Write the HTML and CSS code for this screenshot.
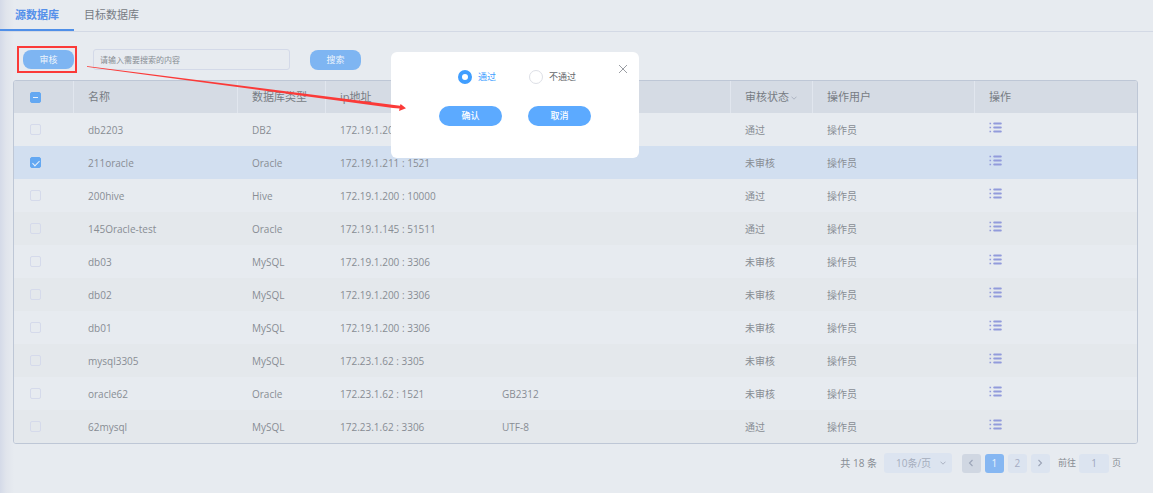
FILE: index.html
```html
<!DOCTYPE html>
<html lang="zh-CN">
<head>
<meta charset="utf-8">
<title>源数据库</title>
<link rel="stylesheet" href="styles.css">
</head>
<body>
<svg class="defs" aria-hidden="true">
  <symbol id="list" viewBox="0 0 13 11">
    <path d="M0.5 1.5h1.6M0.5 5.5h1.6M0.5 9.5h1.6" stroke="currentColor" stroke-width="1.6"/>
    <path d="M5.2 1.5h6.6M5.2 5.5h6.6M5.2 9.5h6.6" stroke="currentColor" stroke-width="2" stroke-linecap="round"/>
  </symbol>
  <symbol id="down" viewBox="0 0 6 4">
    <path d="M0.5 0.7L3 3.2L5.5 0.7" fill="none" stroke="currentColor" stroke-width="0.9"/>
  </symbol>
</svg>
<nav class="tabs">
  <a class="tab active" href="#source">源数据库</a>
  <a class="tab" href="#target">目标数据库</a>
</nav>
<main class="page">
  <div class="toolbar">
    <span class="marked"><button class="btn" type="button">审核</button></span>
    <input class="search" type="text" placeholder="请输入需要搜索的内容" aria-label="搜索内容">
    <button class="btn" type="button">搜索</button>
  </div>
  <div class="frame">
    <table class="grid">
      <colgroup><col class="c-check"><col class="c-name"><col class="c-type"><col class="c-wide"><col class="c-code"><col class="c-state"><col class="c-wide"><col class="c-wide"></colgroup>
      <thead>
        <tr><th><input class="check partial" type="checkbox" aria-label="全选"></th><th>名称</th><th>数据库类型</th><th>ip地址</th><th></th><th>审核状态<svg class="sort"><use href="#down"/></svg></th><th>操作用户</th><th>操作</th></tr>
      </thead>
      <tbody>
        <tr><td><input class="check" type="checkbox" aria-label="db2203"></td><td>db2203</td><td>DB2</td><td>172.19.1.200 : 50000</td><td></td><td>通过</td><td>操作员</td><td><button class="more" type="button" aria-label="详情"><svg><use href="#list"/></svg></button></td></tr>
        <tr class="selected"><td><input class="check" type="checkbox" checked aria-label="211oracle"></td><td>211oracle</td><td>Oracle</td><td>172.19.1.211 : 1521</td><td></td><td>未审核</td><td>操作员</td><td><button class="more" type="button" aria-label="详情"><svg><use href="#list"/></svg></button></td></tr>
        <tr><td><input class="check" type="checkbox" aria-label="200hive"></td><td>200hive</td><td>Hive</td><td>172.19.1.200 : 10000</td><td></td><td>通过</td><td>操作员</td><td><button class="more" type="button" aria-label="详情"><svg><use href="#list"/></svg></button></td></tr>
        <tr><td><input class="check" type="checkbox" aria-label="145Oracle-test"></td><td>145Oracle-test</td><td>Oracle</td><td>172.19.1.145 : 51511</td><td></td><td>通过</td><td>操作员</td><td><button class="more" type="button" aria-label="详情"><svg><use href="#list"/></svg></button></td></tr>
        <tr><td><input class="check" type="checkbox" aria-label="db03"></td><td>db03</td><td>MySQL</td><td>172.19.1.200 : 3306</td><td></td><td>未审核</td><td>操作员</td><td><button class="more" type="button" aria-label="详情"><svg><use href="#list"/></svg></button></td></tr>
        <tr><td><input class="check" type="checkbox" aria-label="db02"></td><td>db02</td><td>MySQL</td><td>172.19.1.200 : 3306</td><td></td><td>未审核</td><td>操作员</td><td><button class="more" type="button" aria-label="详情"><svg><use href="#list"/></svg></button></td></tr>
        <tr><td><input class="check" type="checkbox" aria-label="db01"></td><td>db01</td><td>MySQL</td><td>172.19.1.200 : 3306</td><td></td><td>未审核</td><td>操作员</td><td><button class="more" type="button" aria-label="详情"><svg><use href="#list"/></svg></button></td></tr>
        <tr><td><input class="check" type="checkbox" aria-label="mysql3305"></td><td>mysql3305</td><td>MySQL</td><td>172.23.1.62 : 3305</td><td></td><td>未审核</td><td>操作员</td><td><button class="more" type="button" aria-label="详情"><svg><use href="#list"/></svg></button></td></tr>
        <tr><td><input class="check" type="checkbox" aria-label="oracle62"></td><td>oracle62</td><td>Oracle</td><td>172.23.1.62 : 1521</td><td>GB2312</td><td>未审核</td><td>操作员</td><td><button class="more" type="button" aria-label="详情"><svg><use href="#list"/></svg></button></td></tr>
        <tr><td><input class="check" type="checkbox" aria-label="62mysql"></td><td>62mysql</td><td>MySQL</td><td>172.23.1.62 : 3306</td><td>UTF-8</td><td>通过</td><td>操作员</td><td><button class="more" type="button" aria-label="详情"><svg><use href="#list"/></svg></button></td></tr>
      </tbody>
    </table>
  </div>
  <div class="pager">
    <span class="total">共 18 条</span>
    <span class="size"><select aria-label="每页条数"><option>10条/页</option></select><svg class="caret"><use href="#down"/></svg></span>
    <div class="pages">
      <button class="num off" type="button" aria-label="上一页"><svg viewBox="0 0 6 8"><path d="M4.5 1L1.5 4L4.5 7" fill="none" stroke="currentColor" stroke-width="1.1"/></svg></button>
      <button class="num current" type="button">1</button>
      <button class="num" type="button">2</button>
      <button class="num next" type="button" aria-label="下一页"><svg viewBox="0 0 6 8"><path d="M1.5 1L4.5 4L1.5 7" fill="none" stroke="currentColor" stroke-width="1.1"/></svg></button>
    </div>
    <label class="jump">前往<input type="text" value="1">页</label>
  </div>
</main>
<section class="dialog" role="dialog" aria-label="审核">
  <button class="close" type="button" aria-label="关闭"><svg viewBox="0 0 10 10"><path d="M1 1L9 9M9 1L1 9" stroke="currentColor" stroke-width="0.9"/></svg></button>
  <div class="choices">
    <label class="choice"><input type="radio" name="result" checked><span>通过</span></label>
    <label class="choice"><input type="radio" name="result"><span>不通过</span></label>
  </div>
  <div class="actions">
    <button class="pill" type="button">确认</button>
    <button class="pill" type="button">取消</button>
  </div>
</section>
<svg class="arrow" viewBox="0 0 320 46" aria-hidden="true"><path d="M0 0L313 39.8L313.6 38L319 42.3L312 45L312.6 42.6L306 42L0 0.8Z" fill="#fb3a38"/></svg>
</body>
</html>
```
FILE: styles.css
```css
* { box-sizing: border-box; }
body {
  margin: 0;
  min-height: 100vh;
  position: relative;
  background: linear-gradient(90deg, #d4dae8 0, #e0e4ec 6px, #e7ebf0 14px);
  color: #888d94;
  font: 10px/14px "Open Sans", "Noto Sans CJK SC", sans-serif;
}
button, input, select { font: inherit; color: inherit; margin: 0; padding: 0; }
button { border: 0; background: none; }
svg { display: block; }
.defs { position: absolute; width: 0; height: 0; }

.tabs { display: flex; height: 32px; border-bottom: 1px solid #d3d9e5; }
.tab {
  display: flex;
  align-items: center;
  height: 31px;
  padding: 0 10px;
  border-bottom: 2px solid transparent;
  color: #777c84;
  font-size: 11px;
  text-decoration: none;
}
.tab.active { padding: 0 15px; border-color: #4f8fe8; color: #5590ea; font-weight: 700; }

.page { padding: 14px 15px 20px 13px; }
.toolbar { display: flex; align-items: center; padding-left: 4px; height: 27px; }
.marked { display: flex; padding: 2px 1px 2px 4px; border: 2px solid #fb3a38; }
.btn { width: 51px; height: 20px; border-radius: 8px; background: #7eb5f2; color: #edf4fc; font-size: 9px; }
.marked .btn { height: 19px; }
.search {
  width: 197px;
  height: 21px;
  margin: 0 20px 0 16px;
  padding: 0 6px;
  border: 1px solid #d3d9e8;
  border-radius: 3px;
  background: transparent;
  font-size: 8px;
}
.search::placeholder { color: #888d94; opacity: 1; }

.frame { margin-top: 7px; border: 1px solid #bec7d6; border-radius: 3px; overflow: hidden; }
.grid { width: 100%; table-layout: fixed; border-collapse: separate; border-spacing: 0; }
.c-check { width: 60px; }
.c-name { width: 164px; }
.c-wide { width: 162px; }
.c-type { width: 88px; }
.c-code { width: 243px; }
.c-state { width: 82px; }
th, td { height: 33px; padding: 0 0 0 14px; text-align: left; white-space: nowrap; }
th { height: 32px; background: #d5dbe4; border-right: 1px solid #e1e6ee; color: #777c83; font-size: 11px; font-weight: 400; }
th:nth-child(4), th:last-child { border-right: 0; }
th:first-child, td:first-child { padding-left: 16px; }
tbody tr:nth-child(even) { background: #e4e8ec; }
tbody tr.selected { background: #d2dff0; }
.sort { display: inline-block; width: 6px; height: 4px; margin-left: 2px; vertical-align: middle; color: #a8b0be; }
.check {
  appearance: none;
  display: block;
  width: 11px;
  height: 11px;
  border: 1px solid #d5daeb;
  border-radius: 2px;
}
.check:checked, .check.partial { display: grid; place-items: center; border-color: #64a8f2; background: #64a8f2; }
.check.partial::after { content: ""; width: 5px; height: 1px; background: #e7f0fb; }
.check:checked::after { content: ""; width: 3px; height: 6px; border: solid #e7f0fb; border-width: 0 1px 1px 0; transform: rotate(45deg); }
.more { display: block; margin-bottom: 5px; color: #929bdb; }
.more svg { width: 13px; height: 11px; }

.pager { display: flex; align-items: center; justify-content: flex-end; margin-top: 9px; padding-right: 17px; }
.size { position: relative; margin: 0 10px 0 7px; }
.size select { appearance: none; display: block; width: 68px; height: 20px; padding-left: 12px; border: 0; border-radius: 3px; background: #dce4f0; color: #a5adbd; }
.caret { position: absolute; right: 6px; top: 8px; width: 6px; height: 4px; color: #a5adbd; }
.pages { display: flex; gap: 4px; margin-right: 8px; }
.num { display: grid; place-items: center; width: 19px; height: 19px; border-radius: 3px; background: #dce4f0; color: #a5adc4; }
.num svg { width: 6px; height: 8px; }
.num.off { background: #d0d7e2; color: #9ca5b8; }
.num.next { color: #9ba3b6; }
.num.current { background: #86b7f2; color: #edf4fc; }
.jump { display: flex; align-items: center; gap: 3px; font-size: 9px; }
.jump input { width: 30px; height: 19px; border: 0; border-radius: 3px; background: #dce4f0; color: #a0a8bd; font-size: 10px; text-align: center; }

.dialog {
  position: absolute;
  left: 391px;
  top: 52px;
  width: 248px;
  padding: 18px 0 32px;
  border-radius: 6px;
  background: #fff;
}
.close { position: absolute; top: 12px; right: 11px; color: #8f9298; }
.close svg { width: 10px; height: 10px; }
.choices { display: flex; gap: 33px; padding-left: 67px; }
.choice { display: flex; align-items: center; gap: 6px; color: #65686d; font-size: 9px; }
.choice input { appearance: none; width: 14px; height: 14px; border: 1px solid #dddfe6; border-radius: 50%; background: #fff; }
.choice input:checked { border: 4px solid #409eff; }
.choice input:checked + span { color: #409eff; }
.actions { display: flex; justify-content: center; gap: 26px; margin-top: 22px; }
.pill { width: 63px; height: 20px; border-radius: 10px; background: #5caaff; color: #fff; font-size: 9px; font-weight: 500; }
.arrow { position: absolute; left: 87px; top: 66px; width: 320px; height: 46px; pointer-events: none; }
```
